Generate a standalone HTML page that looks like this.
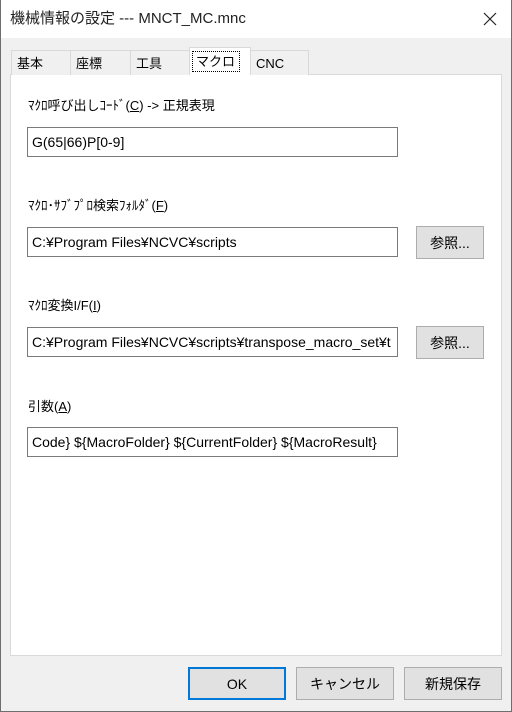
<!DOCTYPE html>
<html><head><meta charset="utf-8"><style>
*{box-sizing:border-box;margin:0;padding:0;line-height:1}
body{width:512px;height:712px;overflow:hidden;background:#f0f0f0;font-family:"Liberation Sans","Noto Sans CJK JP",sans-serif;font-size:12px;color:#000;position:relative}
.a{position:absolute}
#win{left:0;top:0;width:512px;height:712px;border:1px solid #6e6e6e;border-top:none}
#title{left:0;top:0;width:512px;height:38px;background:#fff}
.tab{position:absolute;top:50px;height:25px;border:1px solid #d9d9d9;border-bottom:none;background:#f0f0f0;font-size:13px;padding:6px 0 0 5px}
#panel{left:10px;top:74px;width:492px;height:582px;background:#fff;border:1px solid #d9d9d9}
.lbl{position:absolute;left:28px;font-size:13px}
.inp{position:absolute;left:27px;width:371px;height:30px;border:1px solid #7a7a7a;background:#fff;font-size:14px;padding:7px 0 0 4px;white-space:nowrap;overflow:hidden}
.btn{position:absolute;background:#e1e1e1;border:1px solid #adadad;font-size:14px;display:flex;align-items:center;justify-content:center}
u{text-decoration:underline}
</style></head><body>
<div class="a" id="title"><div class="a" style="left:10px;top:11px;font-size:15px;color:#222">機械情報の設定 --- MNCT_MC.mnc</div>
<svg class="a" style="left:482px;top:11px" width="16" height="16"><path d="M2 2L14 14M14 2L2 14" stroke="#222" stroke-width="1.2"/></svg></div>
<div class="a" id="panel"></div>
<div class="tab" style="left:11px;width:60px">基本</div>
<div class="tab" style="left:70px;width:61px">座標</div>
<div class="tab" style="left:130px;width:61px">工具</div>
<div class="tab" style="left:250px;width:59px">CNC</div>
<div class="tab" style="left:189px;top:47px;height:28px;width:62px;background:#fff;padding-top:7px"><span style="outline:1px dotted #000;outline-offset:2px;padding:0 2px 0 1px">マクロ</span></div>
<div class="lbl" style="top:99px">ﾏｸﾛ呼び出しｺｰﾄﾞ(<u>C</u>) -&gt; 正規表現</div>
<div class="inp" style="top:127px">G(65|66)P[0-9]</div>
<div class="lbl" style="top:199px">ﾏｸﾛ･ｻﾌﾞﾌﾟﾛ検索ﾌｫﾙﾀﾞ(<u>F</u>)</div>
<div class="inp" style="top:227px">C:¥Program Files¥NCVC¥scripts</div>
<div class="btn" style="left:416px;top:226px;width:68px;height:33px">参照...</div>
<div class="lbl" style="top:299px">ﾏｸﾛ変換I/F(<u>I</u>)</div>
<div class="inp" style="top:327px">C:¥Program Files¥NCVC¥scripts¥transpose_macro_set¥t</div>
<div class="btn" style="left:416px;top:326px;width:68px;height:33px">参照...</div>
<div class="lbl" style="top:400px">引数(<u>A</u>)</div>
<div class="inp" style="top:427px">Code} ${MacroFolder} ${CurrentFolder} ${MacroResult}</div>
<div class="btn" style="left:188px;top:667px;width:98px;height:33px;border:2px solid #0078d7">OK</div>
<div class="btn" style="left:296px;top:667px;width:98px;height:33px">キャンセル</div>
<div class="btn" style="left:404px;top:667px;width:98px;height:33px">新規保存</div>
<div class="a" id="win"></div>
</body></html>
